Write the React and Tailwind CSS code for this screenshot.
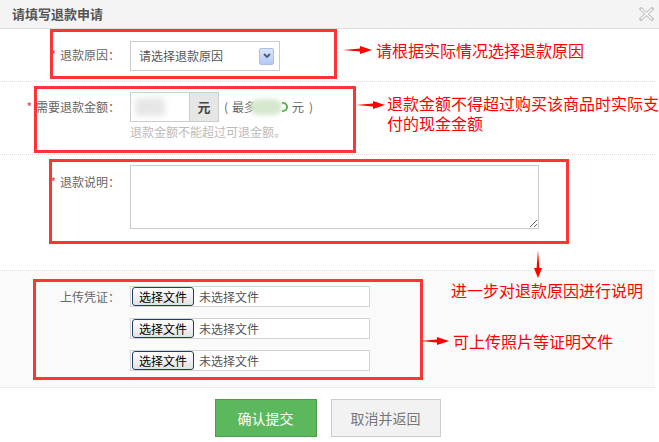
function Arrow({ className }) {
  return (
    <svg width="30" height="10" viewBox="0 0 30 10" className={className}>
      <polygon points="0,5 17,3.6 17,1 29,5 17,9 17,6.4" fill="#f00" />
    </svg>
  )
}

function DownArrow({ className }) {
  return (
    <svg width="10" height="29" viewBox="0 0 10 29" className={className}>
      <polygon points="5,0 6.4,18 9,18 5,28 1,18 3.6,18" fill="#f00" />
    </svg>
  )
}

function Label({ children, star, className = '' }) {
  return (
    <div className={`w-[120px] shrink-0 text-right text-[12px] text-[#666] ${className}`}>
      {star && <span className="text-[#e4393c] mr-[4px]">*</span>}
      {children}
    </div>
  )
}

function FileRow() {
  return (
    <div className="w-[240px] h-[21px] border border-[#d4d4d4] bg-white flex items-center pl-[1px]">
      <div className="h-[19px] w-[62px] flex items-center justify-center border border-[#1f3f6a] rounded-[3px] bg-gradient-to-b from-white to-[#e2e2e2] text-[12px] text-black">
        选择文件
      </div>
      <span className="ml-[5px] text-[12px] text-[#555]">未选择文件</span>
    </div>
  )
}

export default function App() {
  return (
    <div className="relative w-[659px] h-[442px] bg-white overflow-hidden font-['Noto_Sans_CJK_SC','Microsoft_YaHei',sans-serif]">
      <div className="h-[29px] bg-[#f4f4f4] border-b border-[#ddd] flex items-center justify-between pl-[12px] pr-[5px]">
        <span className="text-[13px] font-bold text-[#555]">请填写退款申请</span>
        <svg width="15" height="14" viewBox="0 0 15 14">
          <path d="M2 2 L13 12 M13 2 L2 12" stroke="#c4c4c4" strokeWidth="3.6" strokeLinecap="square" />
          <path d="M2 2 L13 12 M13 2 L2 12" stroke="#fafafa" strokeWidth="1.4" />
        </svg>
      </div>

      <div className="w-[655px]">
        {/* reason */}
        <div className="flex pt-[12px] pb-[10px] border-b border-dotted border-[#ddd]">
          <Label star className="leading-[28px]">退款原因：</Label>
          <div className="ml-[10px] w-[150px] h-[30px] border border-[#ccc] flex items-center justify-between pl-[8px] pr-[5px] text-[12px] text-[#555]">
            <span>请选择退款原因</span>
            <div className="w-[15px] h-[17px] rounded-[2px] border border-[#a9bfeb] bg-gradient-to-b from-[#dbe5fb] to-[#b5c9f3] flex items-center justify-center">
              <svg width="8" height="6" viewBox="0 0 8 6">
                <path d="M1 1 L4 4 L7 1" stroke="#4a5d80" strokeWidth="1.8" fill="none" />
              </svg>
            </div>
          </div>
        </div>

        {/* amount */}
        <div className="flex pt-[10px] pb-[13px] border-b border-dotted border-[#ddd]">
          <Label star className="leading-[30px]">需要退款金额：</Label>
          <div className="ml-[10px]">
            <div className="flex items-center h-[30px] text-[12px] text-[#666]">
              <div className="w-[60px] h-[30px] border border-[#ccc] flex items-center pl-[4px]">
                <div className="w-[30px] h-[18px] bg-[#e6e6e6] blur-[3px] rounded-[4px]" />
              </div>
              <div className="w-[29px] h-[30px] border border-l-0 border-[#ccc] bg-[#e6e6e6] flex items-center justify-center font-bold text-[13px] text-[#444]">
                元
              </div>
              <span className="ml-[5px]">(</span>
              <span className="ml-[4px]">最多</span>
              <span className="relative -ml-[6px] w-[32px] h-[16px] rounded-full bg-[#d6e8cf] blur-[2px]" />
              <span className="w-[6px] h-[10px] border-2 border-l-0 border-[#55b04f] rounded-r-full" />
              <span className="ml-[4px]">元</span>
              <span className="ml-[5px]">)</span>
            </div>
            <div className="mt-[1px] leading-[18px] text-[12px] text-[#bbb]">退款金额不能超过可退金额。</div>
          </div>
        </div>

        {/* description */}
        <div className="flex pt-[10px] pb-[41px] border-b border-dotted border-[#ddd]">
          <Label star className="leading-[30px] pt-[2px]">退款说明：</Label>
          <textarea className="ml-[10px] w-[409px] h-[64px] border border-[#ccc] outline-none block" />
        </div>

        {/* upload */}
        <div className="flex pt-[15px] pb-[16px] bg-[#fafafa] border-b border-dotted border-[#ddd]">
          <Label className="leading-[21px]">上传凭证：</Label>
          <div className="ml-[10px] flex flex-col gap-[11px]">
            <FileRow />
            <FileRow />
            <FileRow />
          </div>
        </div>

        {/* actions */}
        <div className="flex justify-center gap-[14px] pt-[11px]">
          <button className="w-[102px] h-[38px] bg-[#5cb85c] border border-[#4a9e4a] text-white text-[14px]">确认提交</button>
          <button className="w-[110px] h-[38px] bg-[#f2f2f2] border border-[#ccc] text-[#777] text-[14px]">取消并返回</button>
        </div>
      </div>

      {/* annotations */}
      <div className="absolute left-[50px] top-[29px] w-[287px] h-[50px] border-[3px] border-[#ff3535]" />
      <Arrow className="absolute left-[343px] top-[45px]" />
      <div className="absolute left-[376px] top-[40px] leading-[20px] text-[16px] text-[#f00] whitespace-nowrap">请根据实际情况选择退款原因</div>

      <div className="absolute left-[34px] top-[86px] w-[322px] h-[67px] border-[3px] border-[#ff3535]" />
      <Arrow className="absolute left-[356px] top-[100px]" />
      <div className="absolute left-[387px] top-[93px] leading-[20px] text-[16px] text-[#f00] whitespace-nowrap">
        <div>退款金额不得超过购买该商品时实际支</div>
        <div>付的现金金额</div>
      </div>

      <div className="absolute left-[49px] top-[159px] w-[520px] h-[85px] border-[3px] border-[#ff3535]" />
      <DownArrow className="absolute left-[533px] top-[250px]" />
      <div className="absolute left-[451px] top-[280px] leading-[20px] text-[16px] text-[#f00] whitespace-nowrap">进一步对退款原因进行说明</div>

      <div className="absolute left-[33px] top-[279px] w-[390px] h-[101px] border-[3px] border-[#ff3535]" />
      <Arrow className="absolute left-[420px] top-[336px]" />
      <div className="absolute left-[453px] top-[331px] leading-[20px] text-[16px] text-[#f00] whitespace-nowrap">可上传照片等证明文件</div>
    </div>
  )
}
